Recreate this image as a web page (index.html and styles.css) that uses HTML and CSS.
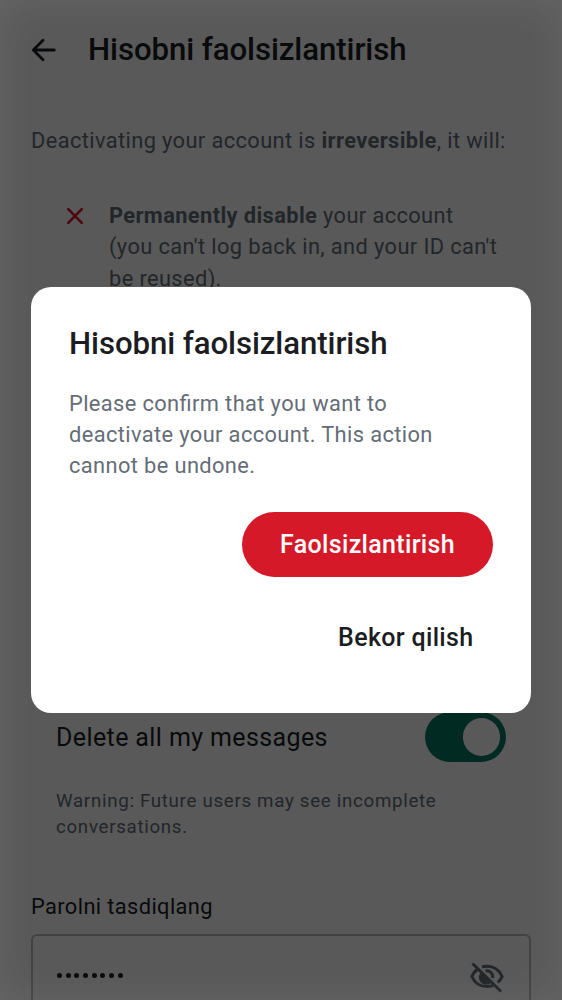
FILE: index.html
```html
<!DOCTYPE html>
<html lang="uz">
<head>
<meta charset="utf-8">
<title>Hisobni faolsizlantirish</title>
<link rel="stylesheet" href="styles.css">
</head>
<body>
<main class="screen">
  <header class="topbar">
    <svg class="back" viewBox="0 0 26 26" fill="none" stroke="currentColor" stroke-width="2.8" stroke-linecap="round" stroke-linejoin="round"><path d="M12 3.200 2.300 13l9.700 9.800M2.600 13h20.700"/></svg>
    <h1 class="title">Hisobni faolsizlantirish</h1>
  </header>
  <section class="content">
    <p class="body-text intro">Deactivating your account is <b>irreversible</b>, it will:</p>
    <div class="bullet">
      <svg class="cross" viewBox="0 0 18 18" fill="none" stroke="currentColor" stroke-width="2.6" stroke-linecap="round"><path d="M2.200 2.200l13.600 13.600M15.800 2.200 2.200 15.800"/></svg>
      <p class="body-text"><b>Permanently disable</b> your account<br>(you can't log back in, and your ID can't<br>be reused).</p>
    </div>
    <div class="option">
      <div class="option-row">
        <span class="option-label">Delete all my messages</span>
        <span class="switch"><span class="thumb"></span></span>
      </div>
      <p class="note">Warning: Future users may see incomplete<br>conversations.</p>
    </div>
    <label class="field-label body-text">Parolni tasdiqlang</label>
    <div class="field">
      <span class="dots"><i></i><i></i><i></i><i></i><i></i><i></i><i></i><i></i></span>
      <svg class="eye" viewBox="0 0 36 32" fill="none" stroke="currentColor" stroke-width="3"><path d="M9.500 7.700C6.600 9.400 4.300 12 2.800 15.500 5.500 21.700 11.300 25.500 18 25.500c2.200 0 4.200-.4 6.100-1.100M13 5.900c1.600-.4 3.300-.6 5-.6 6.700 0 12.500 4 15.200 10.200-1.100 2.300-2.500 4.300-4.400 5.900"/><path d="M16.500 9.900a6 6 0 0 1 7.100 7.100"/><path d="M12 11.500a7.200 7.200 0 0 0 10.200 10.200Z" fill="currentColor" stroke="none"/><path d="m3.500 2.500 28.500 28"/></svg>
    </div>
  </section>
</main>
<div class="scrim">
  <section class="dialog" role="dialog">
    <h2 class="title">Hisobni faolsizlantirish</h2>
    <p class="body-text message">Please confirm that you want to<br>deactivate your account. This action<br>cannot be undone.</p>
    <div class="actions">
      <button class="button primary">Faolsizlantirish</button>
      <button class="button plain">Bekor qilish</button>
    </div>
  </section>
</div>
</body>
</html>
```
FILE: styles.css
```css
* { box-sizing: border-box; }
html, body { height: 1000px; overflow: hidden; }
body { margin: 0; background: #fff; font-family: Roboto, sans-serif; color: #1b1d22; }
h1, h2, p { margin: 0; }
.screen { height: 1000px; padding: 0 31px; overflow: hidden; }
.topbar { display: flex; align-items: center; gap: 31px; height: 100px; }
.back { width: 26px; height: 26px; flex: none; }
.title { font-size: 31.2px; line-height: 40px; font-weight: 500; letter-spacing: -.08px; white-space: nowrap; }
.body-text { font-size: 21.85px; line-height: 31.2px; letter-spacing: .375px; color: #656d77; white-space: nowrap; font-feature-settings: "liga" 1; }
.content { display: flex; flex-direction: column; }
.intro { padding-top: 25px; }
.bullet { display: flex; gap: 25px; padding: 44px 0 0 35px; height: 137.8px; }
.cross { width: 18px; height: 18px; margin: 6.5px 0 0; flex: none; color: #d51928; }
.option { padding: 418px 25px 0; }
.option-row { display: flex; justify-content: space-between; align-items: center; height: 50px; }
.option-label { font-size: 25px; letter-spacing: .39px; }
.switch { display: flex; justify-content: flex-end; align-items: center; width: 81px; height: 50px; padding: 6px; border-radius: 25px; background: #007a61; }
.thumb { width: 37.5px; height: 37.5px; border-radius: 50%; background: #fff; }
.note { margin-top: 25.6px; font-size: 18.73px; line-height: 26.5px; letter-spacing: .69px; color: #656d77; white-space: nowrap; }
.field-label { color: #1b1d22; margin-top: 50.2px; }
.field { display: flex; justify-content: space-between; align-items: center; height: 85px; margin-top: 12.5px; padding: 0 24px; border: 2px solid #bcbcc6; border-radius: 6px; flex: none; }
.dots { display: flex; gap: 3.7px; margin-bottom: 3px; }
.dots i { width: 5px; height: 5px; border-radius: 50%; background: #1b1d22; }
.eye { width: 36px; height: 32px; color: #656d77; }
.scrim { position: absolute; inset: 0; display: flex; align-items: center; justify-content: center; background: rgba(0, 0, 0, .65); box-shadow: inset 0 0 40px rgba(255, 255, 255, .08); }
.dialog { width: 500px; height: 426px; padding: 37px 38px 35px; border-radius: 20px; background: #fff; }
.message { margin-top: 24px; }
.actions { display: flex; flex-direction: column; align-items: flex-end; gap: 28px; margin-top: 30px; }
.button { height: 65px; border: 0; border-radius: 33px; font: 500 25px Roboto, sans-serif; letter-spacing: .33px; white-space: nowrap; }
.primary { width: 251px; padding: 0; background: #d51928; color: #fff; }
.plain { padding: 0 19.5px; background: none; color: #1b1d22; }
```
